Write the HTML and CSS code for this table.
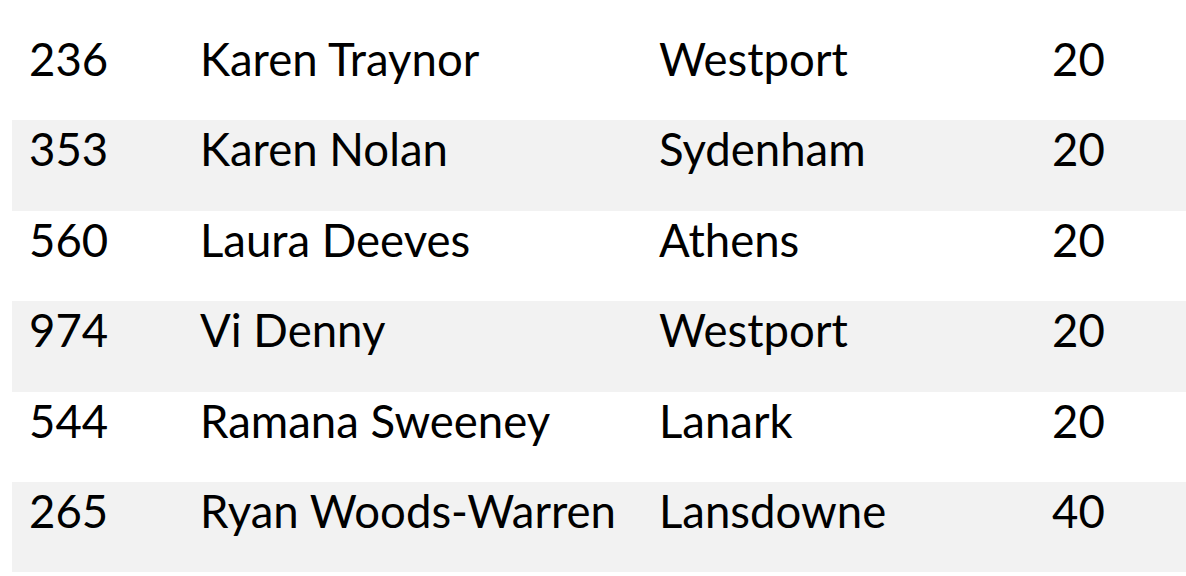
FILE: index.html
```html
<!DOCTYPE html>
<html lang="en">
<head>
  <meta charset="UTF-8">
  <title>Members</title>
  <link rel="stylesheet" href="styles.css">
</head>
<body>

  <table class="members">
    <colgroup>
      <col class="col-id">
      <col class="col-name">
      <col class="col-town">
      <col class="col-fee">
    </colgroup>
    <tbody>
      <tr><td>236</td><td>Karen Traynor</td><td>Westport</td><td>20</td></tr>
      <tr><td>353</td><td>Karen Nolan</td><td>Sydenham</td><td>20</td></tr>
      <tr><td>560</td><td>Laura Deeves</td><td>Athens</td><td>20</td></tr>
      <tr><td>974</td><td>Vi Denny</td><td>Westport</td><td>20</td></tr>
      <tr><td>544</td><td>Ramana Sweeney</td><td>Lanark</td><td>20</td></tr>
      <tr><td>265</td><td>Ryan Woods-Warren</td><td>Lansdowne</td><td>40</td></tr>
    </tbody>
  </table>

</body>
</html>
```

FILE: styles.css
```css
body {
  margin: 0;
  padding: 30px 0 0 12px;
  background: #fff;
  font-family: Lato, "Open Sans", sans-serif;
  color: #000;
  overflow: hidden;
}
.members {
  width: 1174px;
  border-collapse: collapse;
  table-layout: fixed;
}
.col-id { width: 171px; }
.col-name { width: 459px; }
.col-town { width: 393px; }
.col-fee { width: 151px; }
.members td {
  height: 90.4px;
  box-sizing: border-box;
  padding: 2px 0 0 17px;
  vertical-align: top;
  font-size: 45.5px;
  line-height: 54px;
  white-space: nowrap;
}
.members tr:nth-child(even) td {
  background: #f2f2f2;
}
```
